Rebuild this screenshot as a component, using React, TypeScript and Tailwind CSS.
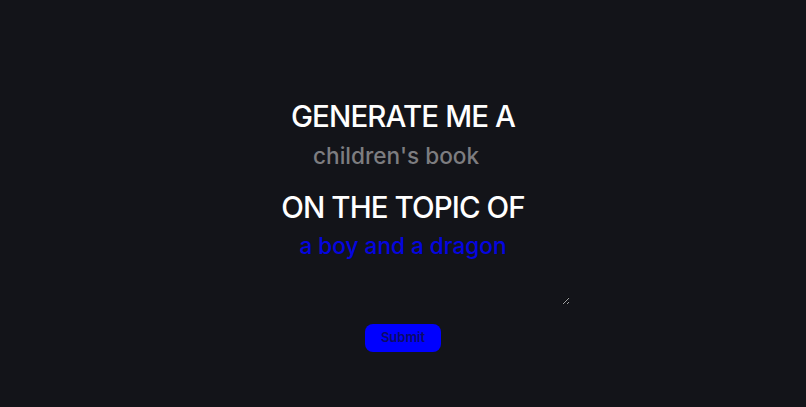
import React, { useState } from 'react';

const App: React.FC = () => {
  const [kind, setKind] = useState("children's book");
  const [topic, setTopic] = useState('a boy and a dragon');

  return (
    <div className="min-h-screen w-full bg-[#131419] flex flex-col items-center font-['Inter',sans-serif]">
      <form
        className="flex flex-col items-center pt-[98px]"
        onSubmit={(e) => e.preventDefault()}
      >
        {/* Book kind */}
        <h1 className="text-[29.5px] leading-[36px] font-medium text-white tracking-[-0.9px]">GENERATE ME A</h1>
        <input
          value={kind}
          onChange={(e) => setKind(e.target.value)}
          className="mt-[6px] w-[180px] h-[32px] bg-transparent text-[22.6px] leading-[32px] font-medium text-[#7d7d80] outline-none border-0 p-0"
        />

        {/* Topic */}
        <h2 className="mt-[17px] text-[29.5px] leading-[36px] font-medium text-white tracking-[-0.9px]">ON THE TOPIC OF</h2>
        <textarea
          value={topic}
          onChange={(e) => setTopic(e.target.value)}
          className="mt-[5px] w-[334px] h-[75px] bg-transparent text-center text-[22.6px] leading-[32px] font-medium text-[#0505e0] outline-none border-0 p-0"
        />

        <button
          type="submit"
          className="mt-[19px] w-[76px] h-[28px] rounded-lg bg-[#0000ff] text-[13px] text-[#0c0c66] font-semibold"
        >
          Submit
        </button>
      </form>
    </div>
  );
};

export default App;
